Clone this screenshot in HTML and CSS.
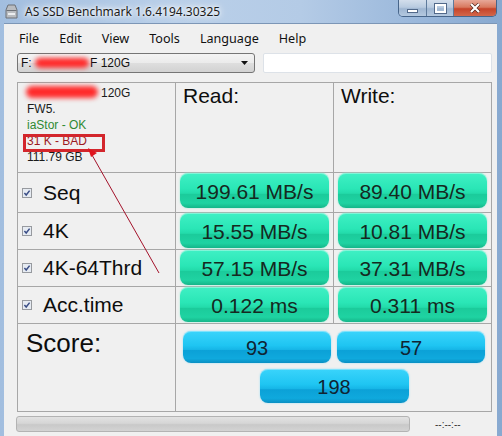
FILE: index.html
```html
<!DOCTYPE html>
<html lang="en">
<head>
  <meta charset="UTF-8">
  <title>AS SSD Benchmark</title>
  <link rel="stylesheet" href="styles.css">
</head>
<body>

  <div class="window">
    <div class="titlebar">
      <svg class="app-icon" viewBox="0 0 13 15">
        <path d="M3 1 H10 L12 6 V14 H1 V6 Z" fill="#b9bcc0" stroke="#6d7177" stroke-width="1"/>
        <path d="M1.5 6.5 H11.5" stroke="#6d7177" stroke-width="1"/>
        <rect x="3" y="9" width="7" height="2" fill="#eceef0"/>
      </svg>
      <span class="title">AS SSD Benchmark 1.6.4194.30325</span>
      <div class="caption-buttons">
        <span class="cap-btn min"><i></i></span>
        <span class="cap-btn max"><i></i></span>
        <span class="cap-btn close">
          <svg viewBox="0 0 12 10" width="12" height="10">
            <path d="M2 1 L10 9 M10 1 L2 9" stroke="#4a2018" stroke-width="3.4"/>
            <path d="M2 1 L10 9 M10 1 L2 9" stroke="#fff" stroke-width="2.2"/>
          </svg>
        </span>
      </div>
    </div>

    <div class="client">
      <ul class="menu">
        <li>File</li>
        <li>Edit</li>
        <li>View</li>
        <li>Tools</li>
        <li>Language</li>
        <li>Help</li>
      </ul>

      <div class="drive-row">
        <div class="combo">
          <span>F:&nbsp;</span><span class="smear smear-sm"></span><span>F 120G</span>
          <svg class="combo-arrow" viewBox="0 0 7 4" width="7" height="4"><path d="M0 0 H7 L3.5 4 Z" fill="#111"/></svg>
        </div>
        <div class="textbox"></div>
      </div>

      <div class="results">
        <div class="cell info">
          <div><span class="smear smear-lg"></span>120G</div>
          <div>FW5.</div>
          <div class="ok">iaStor - OK</div>
          <div class="bad">31 K - BAD</div>
          <div>111.79 GB</div>
        </div>
        <div class="cell head">Read:</div>
        <div class="cell head">Write:</div>

        <div class="cell label">
          <svg class="check" viewBox="0 0 10 10"><rect x="0.5" y="0.5" width="9" height="9" fill="#e6ebf2" stroke="#979a9f"/><path d="M2.4 5 L4.2 7 L7.6 2.6" stroke="#3b4e86" stroke-width="1.5" fill="none"/></svg>
          Seq
        </div>
        <div class="cell"><div class="pill green">199.61 MB/s</div></div>
        <div class="cell"><div class="pill green">89.40 MB/s</div></div>

        <div class="cell label">
          <svg class="check" viewBox="0 0 10 10"><rect x="0.5" y="0.5" width="9" height="9" fill="#e6ebf2" stroke="#979a9f"/><path d="M2.4 5 L4.2 7 L7.6 2.6" stroke="#3b4e86" stroke-width="1.5" fill="none"/></svg>
          4K
        </div>
        <div class="cell"><div class="pill green">15.55 MB/s</div></div>
        <div class="cell"><div class="pill green">10.81 MB/s</div></div>

        <div class="cell label">
          <svg class="check" viewBox="0 0 10 10"><rect x="0.5" y="0.5" width="9" height="9" fill="#e6ebf2" stroke="#979a9f"/><path d="M2.4 5 L4.2 7 L7.6 2.6" stroke="#3b4e86" stroke-width="1.5" fill="none"/></svg>
          4K-64Thrd
        </div>
        <div class="cell"><div class="pill green">57.15 MB/s</div></div>
        <div class="cell"><div class="pill green">37.31 MB/s</div></div>

        <div class="cell label">
          <svg class="check" viewBox="0 0 10 10"><rect x="0.5" y="0.5" width="9" height="9" fill="#e6ebf2" stroke="#979a9f"/><path d="M2.4 5 L4.2 7 L7.6 2.6" stroke="#3b4e86" stroke-width="1.5" fill="none"/></svg>
          Acc.time
        </div>
        <div class="cell"><div class="pill green">0.122 ms</div></div>
        <div class="cell"><div class="pill green">0.311 ms</div></div>

        <div class="cell score-label">Score:</div>
        <div class="cell scores">
          <div class="pill blue">93</div>
          <div class="pill blue">57</div>
          <div class="pill blue total">198</div>
        </div>
      </div>

      <div class="status">
        <div class="progress"></div>
        <span class="eta">--:--:--</span>
      </div>
    </div>

    <!-- red marker drawn over the screenshot -->
    <svg class="annotation" viewBox="0 0 502 436" width="502" height="436">
      <rect x="24.5" y="135.5" width="79" height="15" fill="none" stroke="#d3262c" stroke-width="3"/>
      <path d="M159 273 L92 155" stroke="#a3122a" stroke-width="1" fill="none"/>
      <path d="M88 148 L97 153 L91 157 Z" fill="#e0141e"/>
    </svg>
  </div>

</body>
</html>
```

FILE: styles.css
```css
body {
  margin: 0;
  font-family: "Liberation Sans", Arial, sans-serif;
  background: #9db9db;
}
.window {
  position: relative;
  width: 502px;
  height: 436px;
  overflow: hidden;
  background: linear-gradient(90deg, #a2bedf, #bad0e9 35%, #b4cbe6 60%, #98b6da 85%, #88a9d0);
}
.titlebar {
  height: 23px;
  display: flex;
  align-items: center;
  padding-left: 5px;
}
.app-icon {
  width: 13px;
  height: 15px;
  margin-right: 7px;
}
.title {
  font: 12px "Noto Sans", sans-serif;
  color: #1b1b1b;
  text-shadow: 0 0 6px #fff, 0 0 3px #fff, 0 0 10px #fff;
}
.caption-buttons {
  margin-left: auto;
  margin-right: 5px;
  align-self: flex-start;
  display: flex;
  height: 16px;
  border: 1px solid #47658a;
  border-top: 0;
  border-radius: 0 0 5px 5px;
  overflow: hidden;
}
.cap-btn {
  display: flex;
  align-items: center;
  justify-content: center;
}
.min, .max {
  background: linear-gradient(#d3deec, #b9cbe0 45%, #9fb6d2 55%, #b4c8df);
  border-right: 1px solid #5e7a9c;
}
.min {
  width: 27px;
}
.max {
  width: 26px;
}
.min i {
  display: block;
  width: 9px;
  height: 2px;
  margin-top: 5px;
  background: #fff;
  border: 1px solid #52698a;
}
.max i {
  display: block;
  width: 7px;
  height: 5px;
  border: 2px solid #fff;
  outline: 1px solid #52698a;
}
.close {
  width: 42px;
  background: linear-gradient(#e7a898, #d8795f 45%, #c6442a 55%, #d3674a);
}
.client {
  margin: 0 5px 0 4px;
  height: 413px;
  padding-left: 12px;
  background: #f0f0f0;
  border-top: 1px solid #7c96b6;
}
.menu {
  display: flex;
  gap: 20px;
  align-items: center;
  height: 26px;
  margin: 0;
  padding: 2px 0 0 3px;
  box-sizing: border-box;
  list-style: none;
  font: 12.6px "Noto Sans", sans-serif;
  color: #111;
}
.drive-row {
  display: flex;
  gap: 8px;
  margin: 3px 0 0 1px;
}
.combo {
  position: relative;
  display: flex;
  align-items: center;
  width: 238px;
  height: 20px;
  box-sizing: border-box;
  padding-left: 3px;
  border: 1px solid #757575;
  border-radius: 3px;
  background: linear-gradient(#f3f3f3, #ebebeb 50%, #dedede 51%, #d2d2d2);
  font-size: 12px;
  color: #111;
}
.combo-arrow {
  position: absolute;
  right: 6px;
  top: 7px;
}
.textbox {
  width: 229px;
  height: 20px;
  box-sizing: border-box;
  background: #fff;
  border: 1px solid #dde2e8;
  border-radius: 2px;
}
.smear {
  display: inline-block;
  background: #ff2a2a;
  filter: blur(2.5px);
  border-radius: 6px;
}
.smear-sm {
  width: 54px;
  height: 10px;
  margin-right: 1px;
}
.smear-lg {
  width: 72px;
  height: 12px;
  margin: 0 3px -1px -1px;
}
.results {
  display: grid;
  grid-template-columns: 157px 157px 157px;
  grid-template-rows: 89px 39px 36px 36px 36px 87px;
  gap: 1px;
  width: max-content;
  margin: 9px 0 0 1px;
  background: #a7a7a7;
  border: 1px solid #a7a7a7;
}
.cell {
  background: #f0f0f0;
}
.info {
  padding: 2px 0 0 9px;
  font-size: 12px;
  line-height: 16px;
  color: #1a1a1a;
}
.ok {
  color: #2f8a32;
}
.bad {
  color: #9c1a1f;
}
.head {
  padding: 1px 7px;
  font-size: 21px;
  line-height: 24px;
  color: #0d0d0d;
}
.label {
  display: flex;
  align-items: center;
  padding-left: 4px;
  font-size: 21px;
  color: #0d0d0d;
}
.check {
  width: 10px;
  height: 10px;
  margin-right: 11px;
}
.pill {
  display: flex;
  align-items: center;
  justify-content: center;
  height: 35px;
  margin: 0 4px;
  padding-top: 2px;
  box-sizing: border-box;
  border-radius: 8px;
  font-size: 21px;
  color: #15291f;
}
.green {
  background: linear-gradient(#3ff0c4 0%, #2ae6b6 45%, #23dbaa 58%, #1bcb9b 61%, #1fd3a2 86%, #15b589 100%);
  box-shadow: 0 0 2px #8ff0d2, inset 0 1px 0 rgba(255,255,255,0.35);
}
.score-label {
  padding: 4px 8px;
  font-size: 26px;
  line-height: 30px;
  color: #0d0d0d;
}
.scores {
  grid-column: span 2;
  display: grid;
  grid-template-columns: 148px 148px;
  gap: 6px;
  align-content: start;
  padding: 7px 0 0 7px;
}
.scores .pill {
  height: 32px;
  margin: 0;
  font-size: 20px;
  color: #102432;
}
.scores .total {
  grid-column: span 2;
  justify-self: center;
  width: 149px;
  height: 34px;
}
.blue {
  background: linear-gradient(#3ad4fb 0%, #1fc5f2 45%, #16b6e7 58%, #0ba1d7 61%, #0fa9dd 86%, #0a8fc3 100%);
  box-shadow: 0 0 2px #8fdcf5, inset 0 1px 0 rgba(255,255,255,0.35);
}
.status {
  display: flex;
  align-items: center;
  margin-top: 4px;
}
.progress {
  width: 394px;
  height: 16px;
  box-sizing: border-box;
  border: 1px solid #b3b3b3;
  border-radius: 3px;
  background: linear-gradient(#e2e2e2, #d6d6d6 45%, #c9c9c9 55%, #d3d3d3);
}
.eta {
  margin-left: 25px;
  font-size: 10px;
  color: #333;
}
.annotation {
  position: absolute;
  left: 0;
  top: 0;
  pointer-events: none;
}
```
